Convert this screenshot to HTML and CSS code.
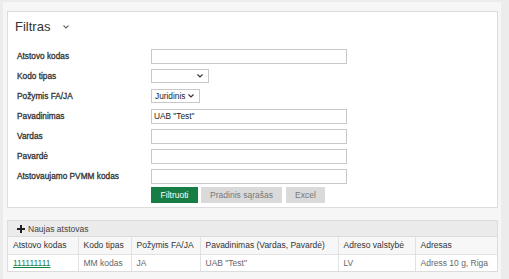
FILE: index.html
```html
<!DOCTYPE html>
<html lang="lt">
<head>
    <meta charset="UTF-8">
    <title>Atstovai</title>
    <link rel="stylesheet" href="styles.css">
</head>
<body>
    <div class="page">
        <div class="panel filter-panel">
            <div class="panel-title">
                <span>Filtras</span>
                <svg class="chevron" width="8" height="6" viewBox="0 0 8 6"><path d="M1.5 1.5 L4 4 L6.5 1.5" fill="none" stroke="#666" stroke-width="1.1"/></svg>
            </div>

            <div class="form">
                <label>Atstovo kodas</label>
                <div class="field"><input type="text" class="text-input"></div>

                <label>Kodo tipas</label>
                <div class="field"><div class="select wide"><span></span><svg width="8" height="6" viewBox="0 0 8 6"><path d="M1.5 1.5 L4 4 L6.5 1.5" fill="none" stroke="#333" stroke-width="1.1"/></svg></div></div>

                <label>Požymis FA/JA</label>
                <div class="field"><div class="select"><span>Juridinis</span><svg width="8" height="6" viewBox="0 0 8 6"><path d="M1.5 1.5 L4 4 L6.5 1.5" fill="none" stroke="#333" stroke-width="1.1"/></svg></div></div>

                <label>Pavadinimas</label>
                <div class="field"><input type="text" class="text-input" value='UAB "Test"'></div>

                <label>Vardas</label>
                <div class="field"><input type="text" class="text-input"></div>

                <label>Pavardė</label>
                <div class="field"><input type="text" class="text-input"></div>

                <label>Atstovaujamo PVMM kodas</label>
                <div class="field"><input type="text" class="text-input"></div>

                <span></span>
                <div class="buttons">
                    <button class="btn btn-green">Filtruoti</button>
                    <button class="btn btn-gray btn-reset">Pradinis sąrašas</button>
                    <button class="btn btn-gray btn-excel">Excel</button>
                </div>
            </div>
        </div>

        <div class="panel table-panel">
            <div class="table-toolbar">
                <svg class="plus" width="8" height="8" viewBox="0 0 8 8"><path d="M4 0 V8 M0 4 H8" stroke="#222" stroke-width="2"/></svg>
                <span>Naujas atstovas</span>
            </div>
            <table class="grid">
                <thead>
                    <tr>
                        <th class="c1">Atstovo kodas</th>
                        <th class="c2">Kodo tipas</th>
                        <th class="c3">Požymis FA/JA</th>
                        <th class="c4">Pavadinimas (Vardas, Pavardė)</th>
                        <th class="c5">Adreso valstybė</th>
                        <th>Adresas</th>
                    </tr>
                </thead>
                <tbody>
                    <tr>
                        <td><a href="#">111111111</a></td>
                        <td>MM kodas</td>
                        <td>JA</td>
                        <td>UAB "Test"</td>
                        <td>LV</td>
                        <td>Adress 10 g, Riga</td>
                    </tr>
                </tbody>
            </table>
        </div>
    </div>
</body>
</html>
```

FILE: styles.css
```css
* {
    margin: 0;
    padding: 0;
    box-sizing: border-box;
}

body {
    font-family: 'Liberation Sans', Arial, sans-serif;
    font-size: 8.5px;
    color: #333;
    background: #ececec;
}

.page {
    margin: 2px 5px 0 3px;
    padding: 9px 3px 8px 4px;
    background: #f6f6f6;
    width: 498px;
}

.panel {
    background: white;
    border: 1px solid #dcdcdc;
    width: 491px;
}

.filter-panel {
    height: 197px;
    padding: 0 0 0 8px;
}

.panel-title {
    display: flex;
    align-items: center;
    height: 28px;
    padding-top: 1px;
    margin-left: -1px;
    font-size: 13px;
    color: #333;
}

.chevron {
    margin-left: 12px;
}

.form {
    display: grid;
    grid-template-columns: 135px 197px;
    grid-auto-rows: 20px;
    align-items: center;
    margin-top: 6px;
}

.form label {
    font-size: 8.3px;
    color: #333;
    -webkit-text-stroke: 0.3px #333;
    padding-left: 1px;
}

.text-input {
    display: block;
    width: 196px;
    height: 15px;
    border: 1px solid #c8c8c8;
    font-family: inherit;
    font-size: 8.3px;
    color: #222;
    padding: 0 2px;
    outline: none;
}

.select {
    display: flex;
    align-items: center;
    justify-content: space-between;
    height: 14px;
    width: 49px;
    border: 1px solid #c8c8c8;
    padding: 0 4px 0 3px;
    font-size: 8.3px;
    color: #222;
}

.select.wide {
    width: 58px;
}

.buttons {
    display: flex;
    gap: 3px;
    align-self: start;
    margin-top: 1px;
}

.btn {
    height: 16px;
    border: none;
    font-family: inherit;
    font-size: 8.5px;
    padding: 0;
}

.btn-green {
    background: #167e45;
    color: white;
    width: 47px;
}

.btn-gray {
    background: #dadada;
    color: #777;
}

.btn-reset {
    width: 81px;
}

.btn-excel {
    margin-left: 1px;
    width: 39px;
}

.table-panel {
    margin-top: 12px;
}

.table-toolbar {
    height: 16px;
    background: #ebebeb;
    border-bottom: 1px solid #dcdcdc;
    padding-left: 9px;
    display: flex;
    align-items: center;
    gap: 3px;
    color: #444;
}

.grid {
    width: 100%;
    border-collapse: collapse;
}

.grid th,
.grid td {
    text-align: left;
    height: 17px;
    padding: 0 5px;
    white-space: nowrap;
    border-left: 1px solid #e2e2e2;
}

.grid th:first-child,
.grid td:first-child {
    border-left: none;
}

.grid th {
    font-weight: normal;
    color: #333;
    background: #f7f7f7;
    border-bottom: 1px solid #e2e2e2;
}

.grid td {
    color: #666;
}

.grid a {
    color: #14804a;
}

.c1 { width: 70px; }
.c2 { width: 53px; }
.c3 { width: 69px; }
.c4 { width: 138px; }
.c5 { width: 77px; }
```
